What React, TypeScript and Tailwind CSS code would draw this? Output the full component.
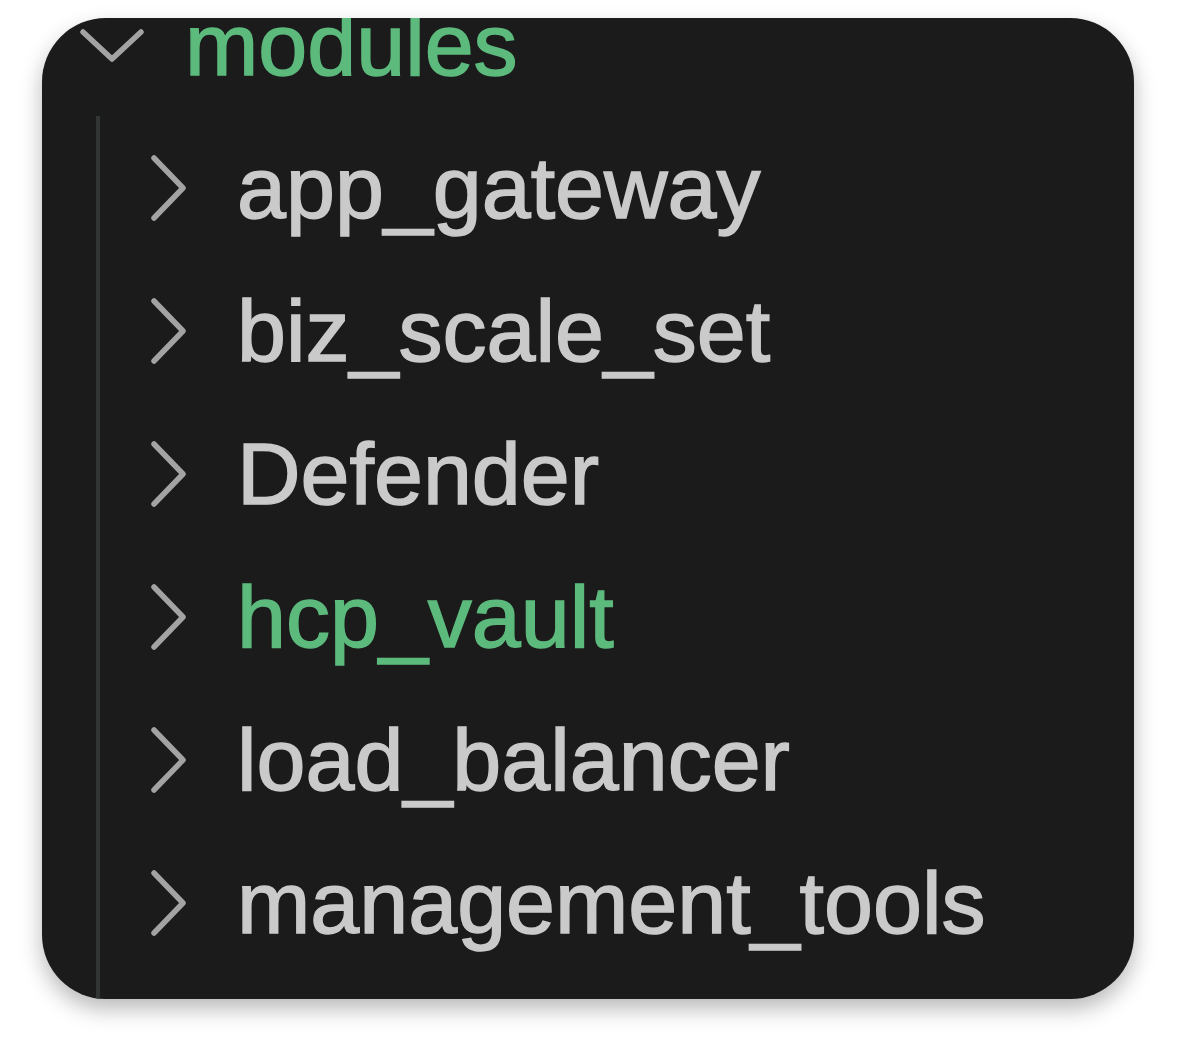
const children = [
  { name: "app_gateway" },
  { name: "biz_scale_set" },
  { name: "Defender" },
  { name: "hcp_vault", changed: true },
  { name: "load_balancer" },
  { name: "management_tools" },
];

const ChevronDown = () => (
  <svg width="64" height="36" viewBox="0 0 64 36" fill="none" className="shrink-0">
    <path d="M3 5 L32 32 L61 5" stroke="#a3a3a3" strokeWidth="5.5" strokeLinecap="round" strokeLinejoin="round" />
  </svg>
);

const ChevronRight = () => (
  <svg width="37" height="66" viewBox="0 0 37 66" fill="none" className="shrink-0">
    <path d="M4 3 L33 33 L4 63" stroke="#a3a3a3" strokeWidth="5.5" strokeLinecap="round" strokeLinejoin="round" />
  </svg>
);

const App = () => {
  return (
    <div className="min-h-screen w-full bg-white pt-[18px] pl-[42px]">
      <div className="flex flex-col w-[1092px] h-[981px] rounded-[64px] bg-[#1b1b1b] overflow-hidden shadow-[0_10px_22px_rgba(0,0,0,0.28)] font-['Liberation_Sans',Arial,sans-serif] text-[88px] leading-[143px] [-webkit-text-stroke:1.5px_currentColor]">
        <div className="-mt-[45px] flex-1 flex flex-col">
          {/* folder header */}
          <div className="flex items-center h-[143px] shrink-0 pl-[38px]">
            <ChevronDown />
            <span className="ml-[41px] text-[#5dba7d] whitespace-nowrap">modules</span>
          </div>

          {/* children, with indent guide */}
          <div className="flex-1 ml-[54px] border-l-[4px] border-[#313533]">
            {children.map((c) => (
              <div key={c.name} className="flex items-center h-[143px] pl-[50px]">
                <ChevronRight />
                <span
                  className={
                    c.changed
                      ? "ml-[50px] text-[#5dba7d] whitespace-nowrap"
                      : "ml-[50px] text-[#cacaca] whitespace-nowrap"
                  }
                >
                  {c.name}
                </span>
              </div>
            ))}
          </div>
        </div>
      </div>
    </div>
  );
};

export default App;
